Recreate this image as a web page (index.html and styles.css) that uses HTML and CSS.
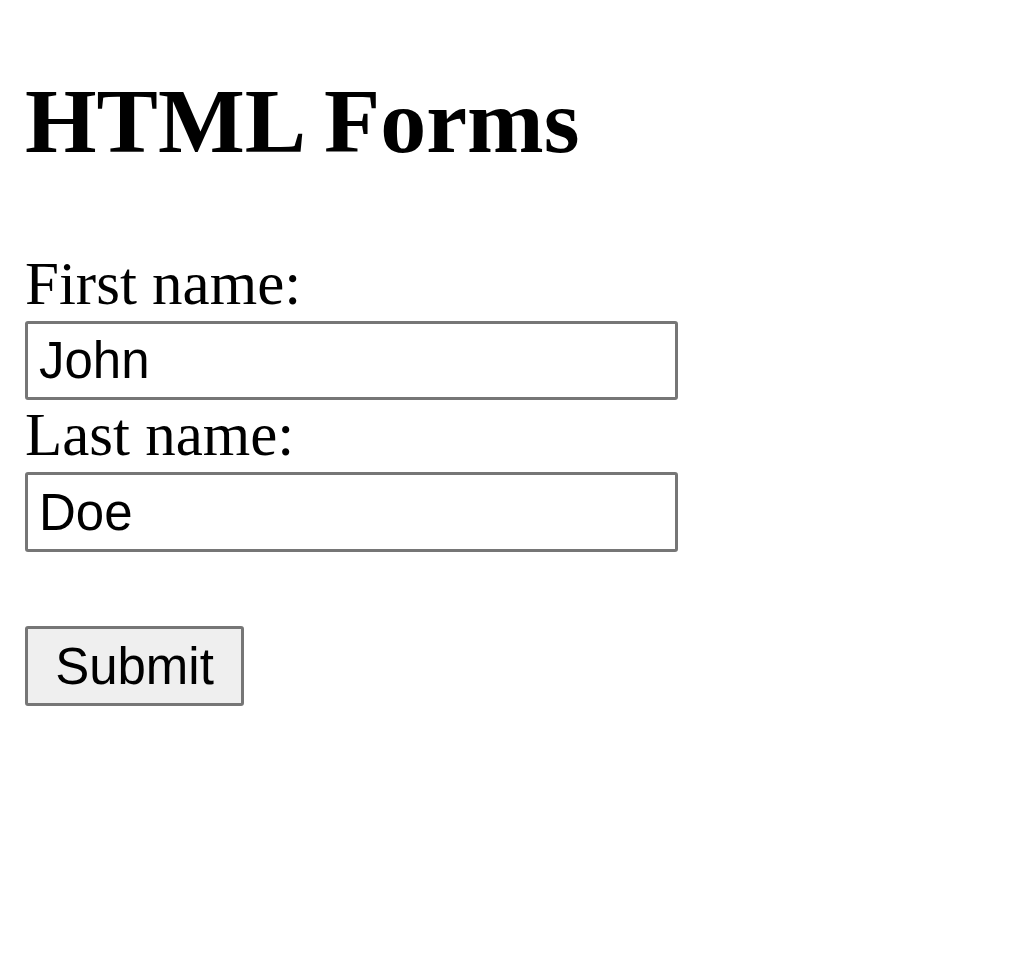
FILE: index.html
```html
<!DOCTYPE html>
<html lang="en">
<head>
<meta charset="utf-8">
<title>HTML Forms</title>
<link rel="stylesheet" href="styles.css">
</head>
<body>
<main class="page">
  <h2 class="title">HTML Forms</h2>
  <form class="form" action="#">
    <label class="label" for="fname">First name:</label>
    <input class="field field-first" type="text" id="fname" name="fname" value="John">
    <label class="label" for="lname">Last name:</label>
    <input class="field field-last" type="text" id="lname" name="lname" value="Doe">
    <input class="submit" type="submit" value="Submit">
  </form>
</main>
</body>
</html>
```

FILE: styles.css
```css
html, body {
  margin: 0;
  padding: 0;
  background: #ffffff;
  color: #000000;
}

.page {
  padding: 0 0 0 25px;
  font-family: "Liberation Serif", "Times New Roman", serif;
}

.title {
  margin: 71px 0 0 0;
  font-size: 92px;
  line-height: 100px;
  font-weight: bold;
}

.form {
  display: flex;
  flex-direction: column;
  align-items: flex-start;
  margin-top: 78px;
}

.label {
  font-size: 61px;
  line-height: 70px;
  height: 70px;
}

.field {
  box-sizing: border-box;
  width: 653px;
  margin: 2px 0 0 0;
  padding: 0 0 0 11px;
  border: 3px solid #767676;
  border-radius: 3px;
  background: #ffffff;
  color: #000000;
  font-family: "Liberation Sans", Arial, sans-serif;
  font-size: 51px;
  outline: none;
}

.field-first {
  height: 79px;
}

.field-last {
  height: 80px;
}

.submit {
  box-sizing: border-box;
  width: 219px;
  height: 80px;
  margin: 74px 0 0 0;
  padding: 0;
  border: 3px solid #767676;
  border-radius: 3px;
  background: #efefef;
  color: #000000;
  font-family: "Liberation Sans", Arial, sans-serif;
  font-size: 51px;
  text-align: center;
}
```
